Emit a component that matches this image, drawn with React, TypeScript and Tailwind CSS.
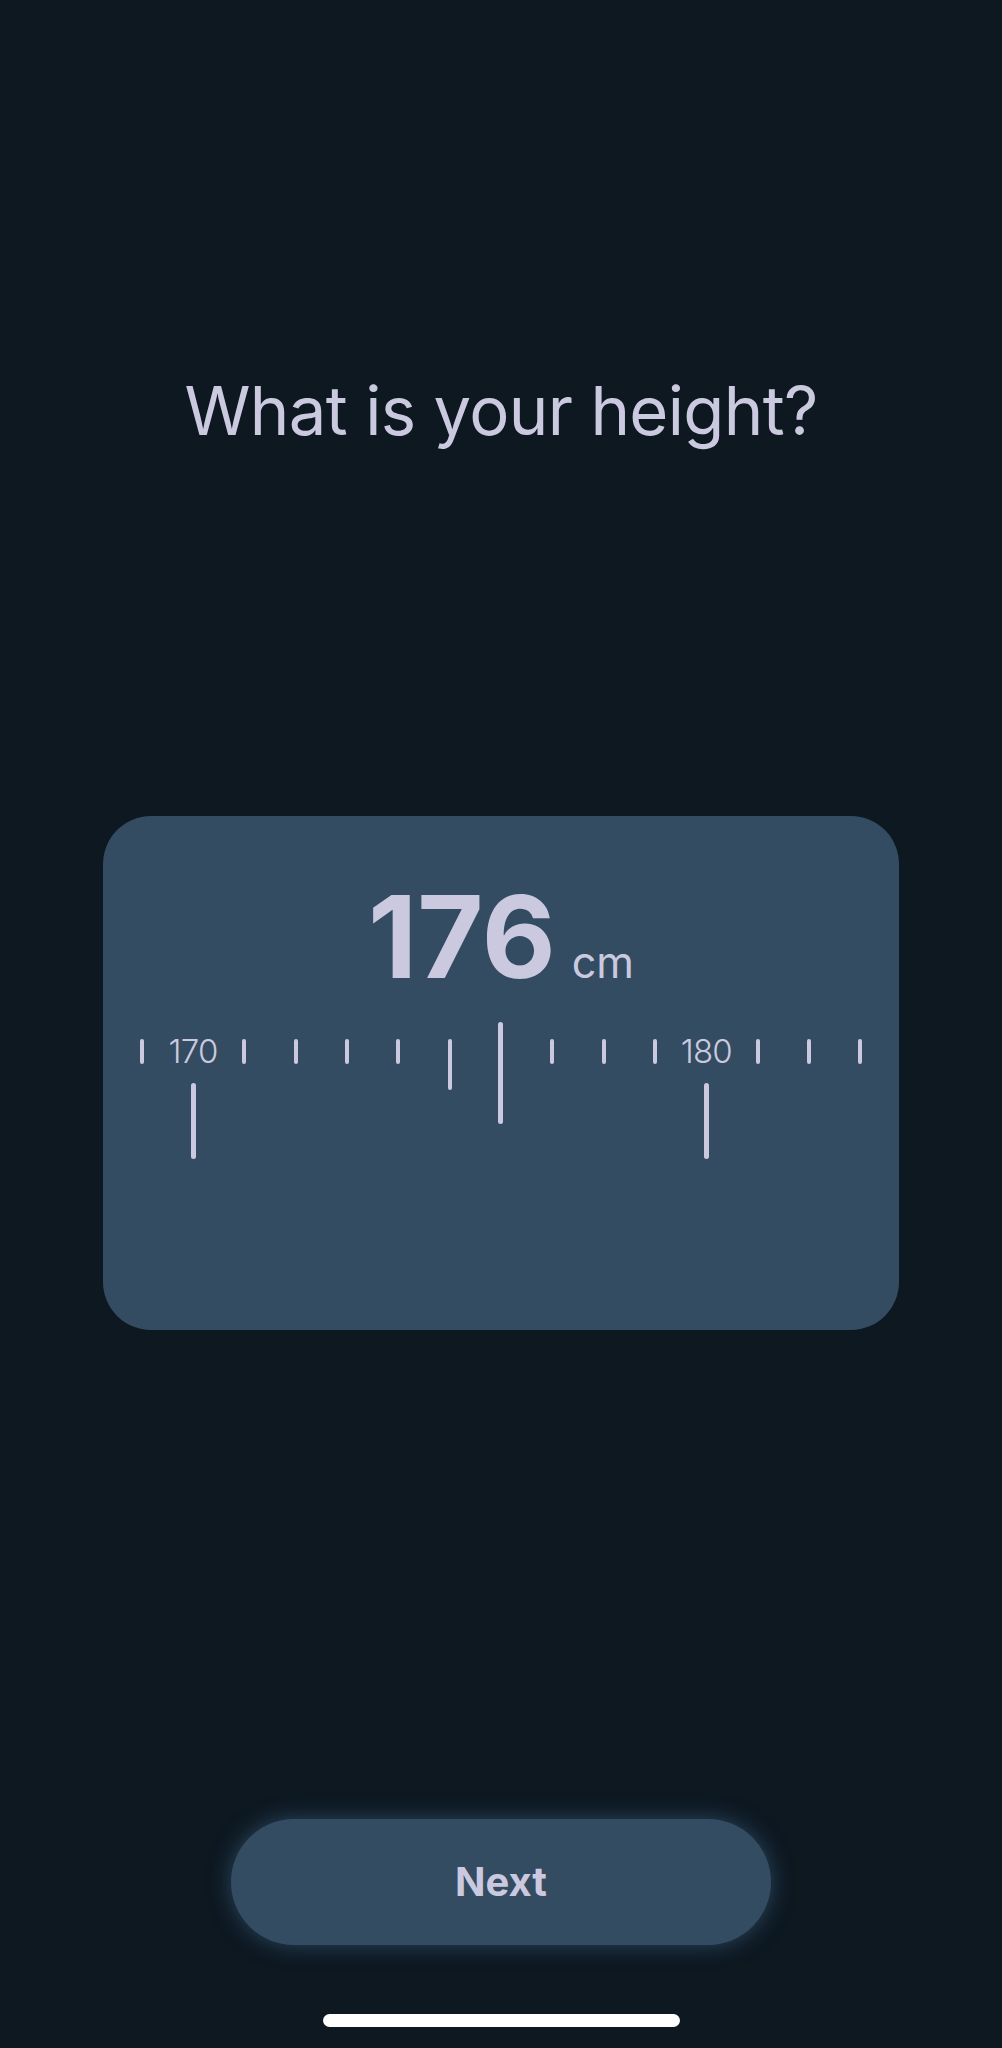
import React from 'react';

const TICK_W = 'w-[51.34px]';

// marks from 169 to 183, 176 is the selected value
const marks = Array.from({ length: 15 }, (_, i) => 169 + i);

function Mark({ value, selected }: { value: number; selected: number }) {
  if (value === selected) {
    return <div className="w-[5px] h-[102px] -mt-[17px] rounded-full bg-[#cbc9df]" />;
  }
  if (value % 10 === 0) {
    return (
      <>
        <span className="text-[33px] leading-[25px] font-light tracking-tight">{value}</span>
        <div className="mt-[19px] w-[5px] h-[76px] rounded-full bg-[#cbc9df]" />
      </>
    );
  }
  if (value % 5 === 0) {
    return <div className="w-[4px] h-[51px] rounded-full bg-[#cbc9df]" />;
  }
  return <div className="w-[4px] h-[25px] rounded-full bg-[#cbc9df]" />;
}

export default function App() {
  const height = 176;

  return (
    <div
      className="w-full min-h-screen bg-[#0d1821] flex flex-col items-center text-[#cbc9df]"
      style={{ fontFamily: 'Inter, "Noto Sans", sans-serif' }}
    >
      {/* Title */}
      <h1 className="pt-[377px] text-[67px] leading-none font-normal tracking-[-0.01em]">
        What is your height?
      </h1>

      {/* Picker card */}
      <div className="mt-[372px] w-[796px] h-[514px] rounded-[48px] bg-[#344c62] flex flex-col items-center pt-[64px]">
        <div className="flex items-baseline h-[112px] gap-[16px]">
          <span className="text-[114px] leading-none font-bold">{height}</span>
          <span className="text-[43px] leading-none font-normal">cm</span>
        </div>

        <div className="mt-[47px] flex">
          {marks.map((m) => (
            <div key={m} className={`${TICK_W} flex flex-col items-center`}>
              <Mark value={m} selected={height} />
            </div>
          ))}
        </div>
      </div>

      {/* Next button */}
      <button className="mt-[489px] w-[540px] h-[126px] rounded-full bg-[#344c62] shadow-[0_0_22px_rgba(70,110,145,0.55)] text-[40px] font-bold text-[#cbc9df]">
        Next
      </button>

      {/* Home indicator */}
      <div className="mt-[69px] w-[357px] h-[13px] rounded-full bg-white" />
    </div>
  );
}
